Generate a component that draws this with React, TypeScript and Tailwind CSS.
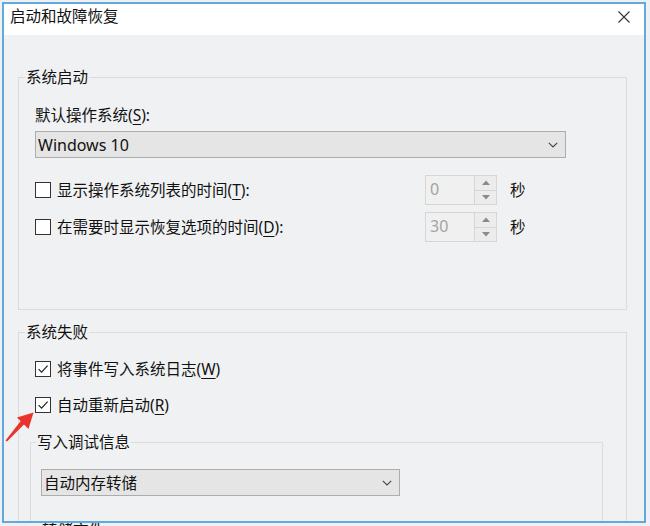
import React from 'react';

const U: React.FC<{ children: React.ReactNode }> = ({ children }) => (
  <span className="underline underline-offset-[3px] decoration-1">{children}</span>
);

const Check: React.FC<{ checked?: boolean }> = ({ checked }) => (
  <span className="w-[16px] h-[16px] border border-[#333333] bg-white flex items-center justify-center shrink-0">
    {checked && (
      <svg width="12" height="12" viewBox="0 0 12 12">
        <path d="M1.6 6.2 L4.6 9.2 L10.6 2.6" fill="none" stroke="#222222" strokeWidth="1.2" />
      </svg>
    )}
  </span>
);

const Chevron: React.FC = () => (
  <svg width="10" height="6" viewBox="0 0 10 6">
    <path d="M0.8 0.8 L5 5 L9.2 0.8" fill="none" stroke="#444444" strokeWidth="1.1" />
  </svg>
);

const Spin: React.FC<{ value: string }> = ({ value }) => (
  <div className="flex w-[72px] h-[30px] border border-[#d6d6d6] bg-[#f0f0f0]">
    <div className="flex-1 pl-[4px] text-[16px] leading-[26px] text-[#a3a3a3]">{value}</div>
    <div className="w-[22px] flex flex-col border-l border-[#d6d6d6] bg-[#ececec]">
      <div className="flex-1 flex items-center justify-center border-b border-[#d6d6d6]">
        <svg width="8" height="5" viewBox="0 0 8 5">
          <path d="M0 5 L4 0.5 L8 5 Z" fill="#8a8a8a" />
        </svg>
      </div>
      <div className="flex-1 flex items-center justify-center">
        <svg width="8" height="5" viewBox="0 0 8 5">
          <path d="M0 0 L4 4.5 L8 0 Z" fill="#8a8a8a" />
        </svg>
      </div>
    </div>
  </div>
);

const CheckRow: React.FC<{ checked?: boolean; children: React.ReactNode }> = ({ checked, children }) => (
  <div className="flex items-center gap-[6px] h-[22px]">
    <Check checked={checked} />
    <span className="leading-[22px]">{children}</span>
  </div>
);

const TimeRow: React.FC<{ value: string; children: React.ReactNode }> = ({ value, children }) => (
  <div className="flex items-center h-[30px]">
    <div className="w-[390px] flex items-center gap-[6px]">
      <Check />
      <span className="leading-[22px]">{children}</span>
    </div>
    <Spin value={value} />
    <span className="ml-[13px] leading-[22px]">秒</span>
  </div>
);

export default function App() {
  return (
    <div className="relative w-[650px] h-[526px] overflow-hidden bg-[#eef1f4] pt-[2px] pl-[2px] text-[15.5px] text-[#111111] [font-family:'Noto_Sans','Noto_Sans_CJK_SC',sans-serif]">
      <div className="w-[644px] h-[521px] border-2 border-[#62a9de] flex flex-col overflow-hidden bg-[#f0f1f3]">
        {/* title bar */}
        <div className="h-[31px] shrink-0 bg-white flex items-start justify-between pl-[6px] pr-[14px] pt-[1px]">
          <span className="leading-[22px]">启动和故障恢复</span>
          <svg width="12" height="12" viewBox="0 0 12 12" className="mt-[6px]">
            <path d="M0.5 0.5 L11.5 11.5 M11.5 0.5 L0.5 11.5" stroke="#333333" strokeWidth="1.1" />
          </svg>
        </div>

        <div className="pl-[14px] pr-[17px]">
          {/* 系统启动 */}
          <fieldset className="mt-[31px] border border-[#dcdcdc] pl-[16px] pt-[16px] pb-[67px]">
            <legend className="-ml-[10px] px-[1px] leading-[22px]">系统启动</legend>
            <div className="leading-[22px]">
              默认操作系统(<U>S</U>):
            </div>
            <div className="mt-[5px] w-[531px] h-[27px] bg-[#e5e5e5] border border-[#adadad] flex items-center justify-between pl-[2px] pr-[7px]">
              <span className="text-[16px] leading-[22px]">Windows 10</span>
              <Chevron />
            </div>
            <div className="mt-[17px] flex flex-col gap-[7px]">
              <TimeRow value="0">
                显示操作系统列表的时间(<U>T</U>):
              </TimeRow>
              <TimeRow value="30">
                在需要时显示恢复选项的时间(<U>D</U>):
              </TimeRow>
            </div>
          </fieldset>

          {/* 系统失败 */}
          <fieldset className="mt-[11px] border border-[#dcdcdc] pl-[11px] pr-[23px] pt-[15px] pb-[40px]">
            <legend className="-ml-[5px] px-[1px] leading-[22px]">系统失败</legend>
            <div className="pl-[5px] flex flex-col gap-[14px]">
              <CheckRow checked>
                将事件写入系统日志(<U>W</U>)
              </CheckRow>
              <CheckRow checked>
                自动重新启动(<U>R</U>)
              </CheckRow>
            </div>
            <fieldset className="mt-[15px] border border-[#dcdcdc] pl-[10px] pt-[16px] pb-[40px]">
              <legend className="-ml-[5px] px-[1px] leading-[22px]">写入调试信息</legend>
              <div className="w-[359px] h-[27px] bg-[#e5e5e5] border border-[#adadad] flex items-center justify-between pl-[2px] pr-[7px]">
                <span className="leading-[22px]">自动内存转储</span>
                <Chevron />
              </div>
            </fieldset>
          </fieldset>
        </div>
      </div>

      {/* text peeking below the cut-off window */}
      <div className="h-[3px] overflow-hidden pl-[40px]">
        <div className="-mt-[4px] leading-[22px]">转储文件:</div>
      </div>

      {/* red annotation arrow */}
      <svg className="absolute left-0 top-[405px]" width="44" height="44" viewBox="0 0 44 44">
        <path d="M5.5 35.5 L21.5 15 L25 18.5 L7 36.5 Z" fill="#e8342b" />
        <path d="M33.5 7.5 L17 12.5 L28.5 24 Z" fill="#e8342b" />
      </svg>
    </div>
  );
}
